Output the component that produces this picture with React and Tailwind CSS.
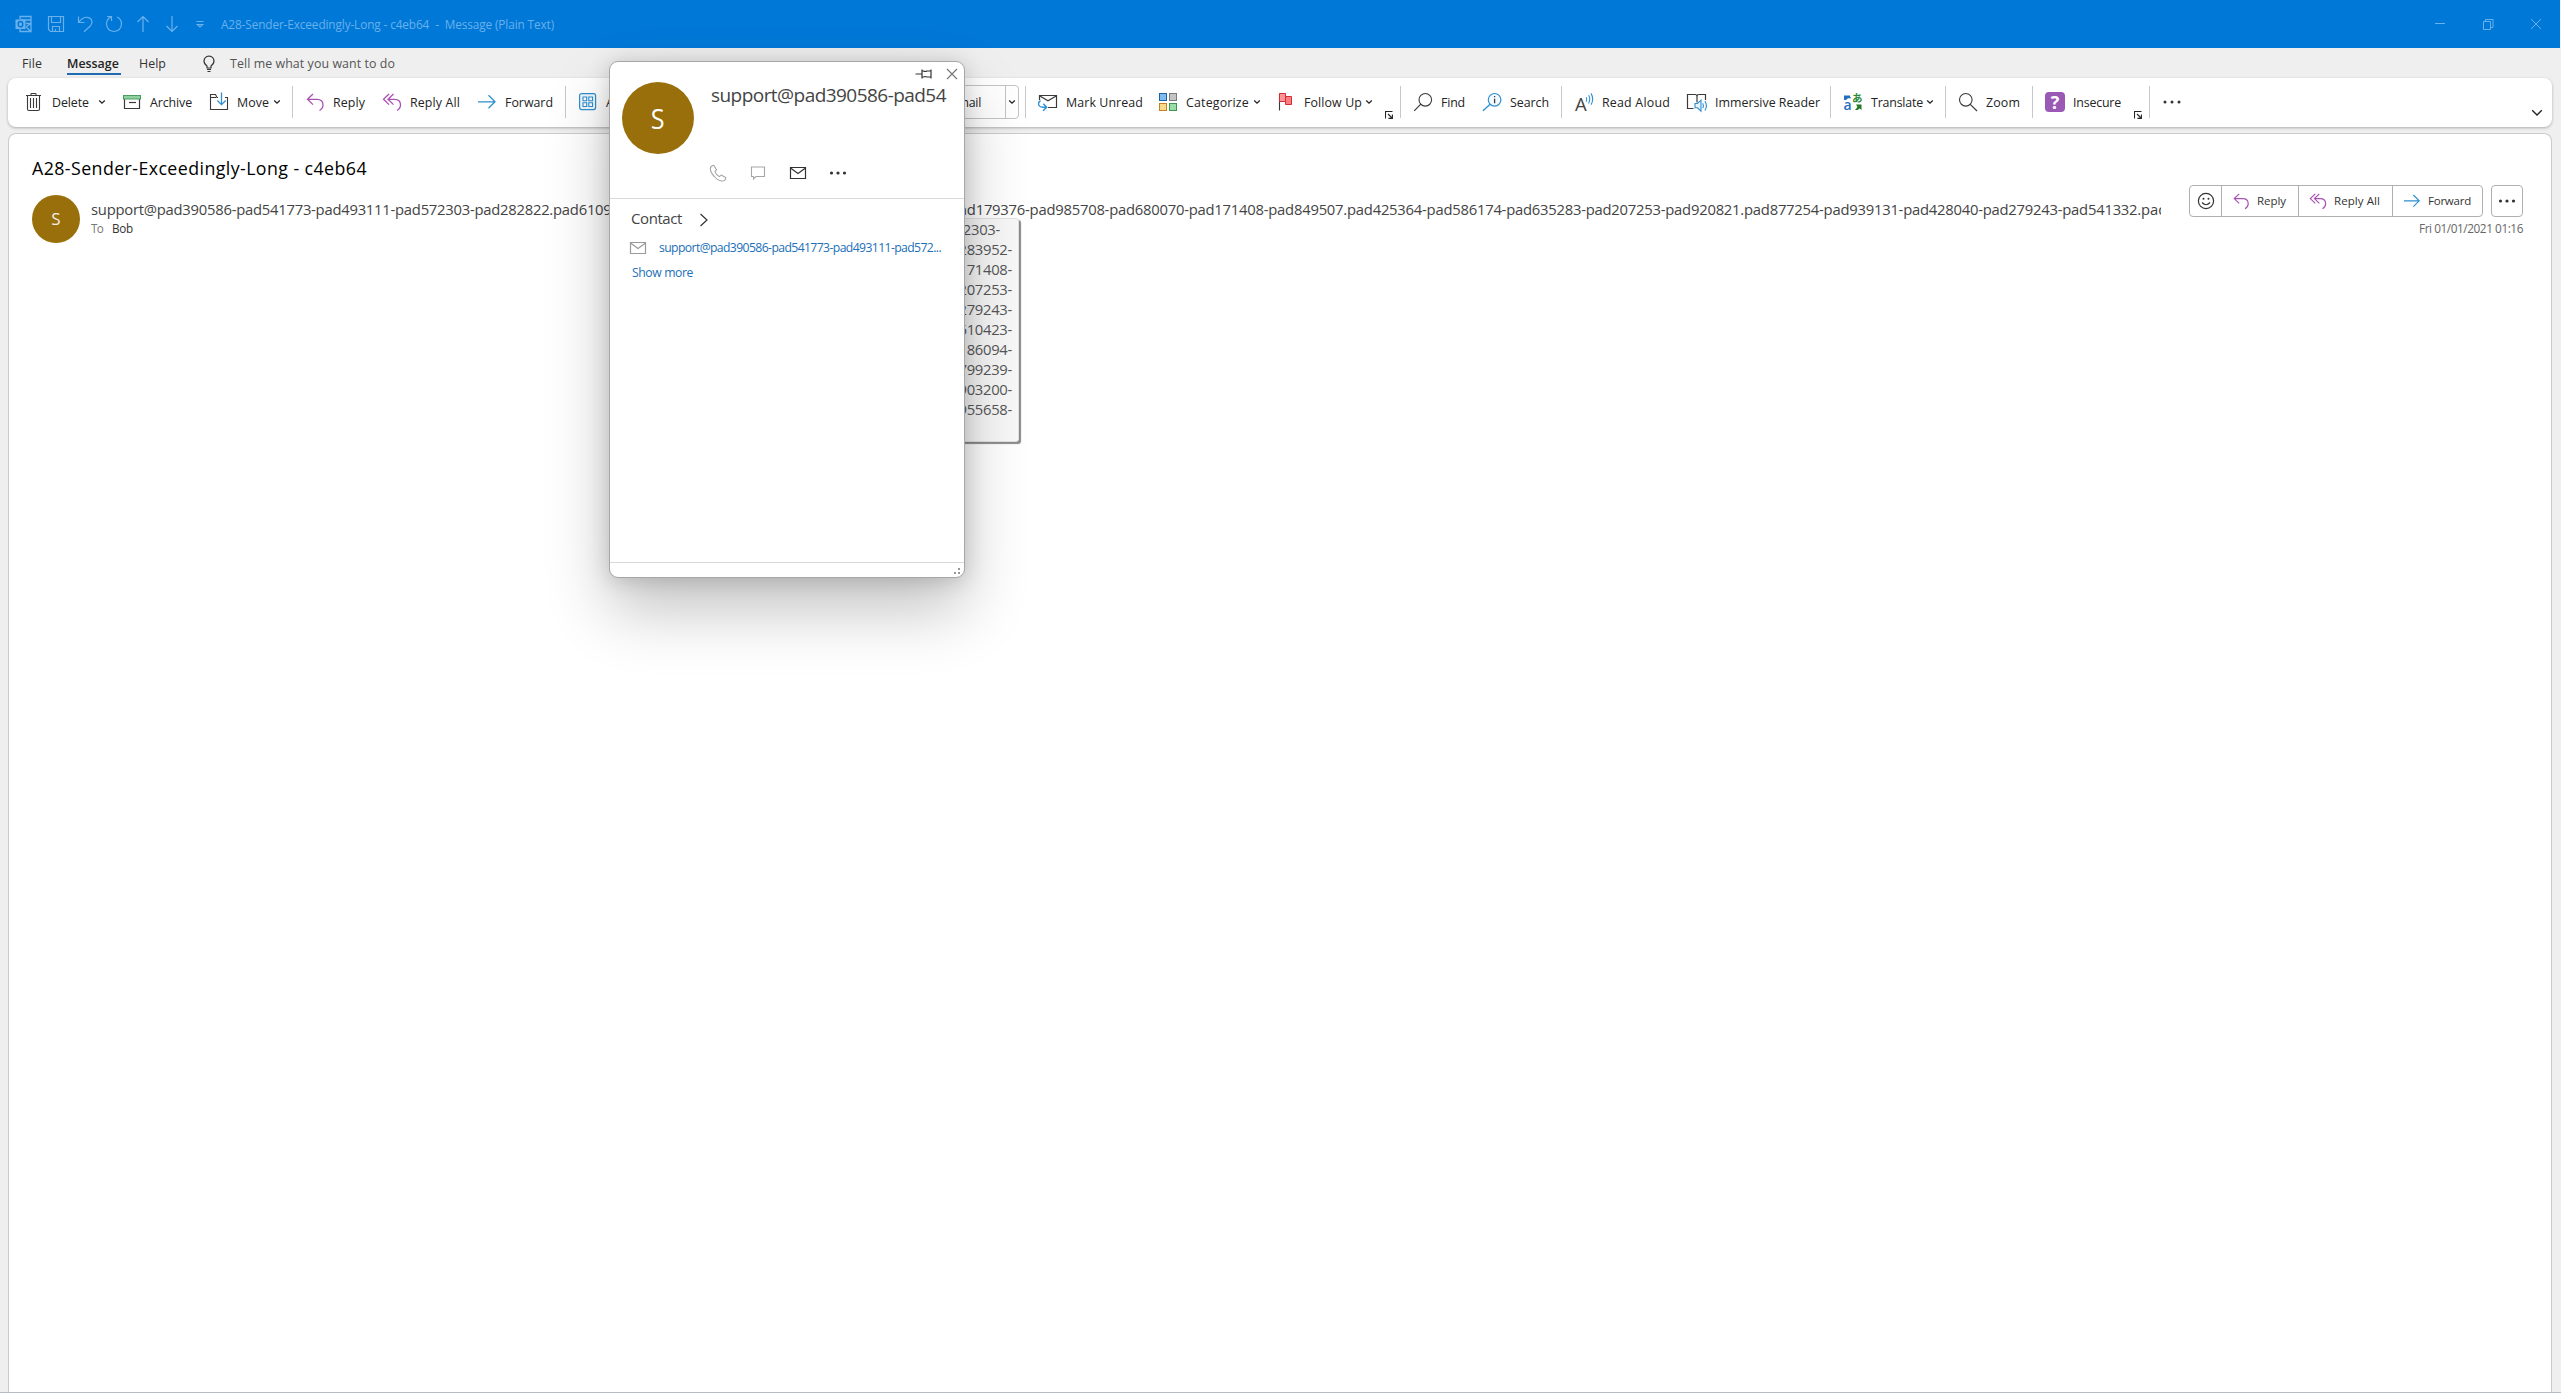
import React, { useLayoutEffect, useRef } from "react";

/* Single-line text whose tracking is adjusted so that it fills the given width. */
function Fit({ w, className = "", children }) {
  const ref = useRef(null);
  useLayoutEffect(() => {
    const el = ref.current;
    el.style.letterSpacing = "0px";
    const natural = el.getBoundingClientRect().width;
    el.style.letterSpacing = (w - natural) / children.length + "px";
  }, [w, children]);
  return (
    <span ref={ref} className={"inline-block shrink-0 whitespace-pre " + className}>
      {children}
    </span>
  );
}

function Svg({ w = 20, h = 20, className = "", children }) {
  return (
    <svg width={w} height={h} viewBox={`0 0 ${w} ${h}`} fill="none" className={"shrink-0 " + className}>
      {children}
    </svg>
  );
}

const DARK = "#3b3a39";
const BLUE = "#2f8fd0";
const PURPLE = "#a851b3";

const Chevron = ({ className = "" }) => (
  <Svg w={8} h={8} className={className}>
    <path d="M1.2 2.6 4 5.2 6.8 2.6" stroke="#242424" strokeWidth="1.3" />
  </Svg>
);

const Launcher = () => (
  <Svg w={8} h={8} className="mb-[7px] mr-[7px] ml-auto self-end">
    <path d="M.5 7.5V.5H7.5M3 3l4 4M7.4 3.4v4h-4" stroke="#242424" strokeWidth="1.1" />
  </Svg>
);

const Divider = () => <div className="mr-3 h-8 w-px shrink-0 bg-[#c8c8c8]" />;

const Dots = ({ className = "" }) => (
  <Svg w={20} h={6} className={className}>
    <circle cx="3" cy="3" r="1.5" fill="#333" />
    <circle cx="10" cy="3" r="1.5" fill="#333" />
    <circle cx="17" cy="3" r="1.5" fill="#333" />
  </Svg>
);

const DotsSmall = () => (
  <Svg w={18} h={6}>
    <circle cx="2.5" cy="3" r="1.6" fill="#333" />
    <circle cx="9" cy="3" r="1.6" fill="#333" />
    <circle cx="15.5" cy="3" r="1.6" fill="#333" />
  </Svg>
);

const Trash = () => (
  <Svg>
    <path d="M2 3.5H17M7 3.3V2.2Q7 1.5 7.7 1.5h3.6q.7 0 .7.7v1.1M3.5 3.5V17q0 1.5 1.5 1.5h9q1.5 0 1.5-1.5V3.5M6.5 6v10M9.5 6v10M12.5 6v10" stroke={DARK} strokeWidth="1.1" />
  </Svg>
);
const Archive = () => (
  <Svg>
    <path d="M2.5 7v9.5h15V7" stroke={DARK} strokeWidth="1.2" />
    <rect x="1.5" y="3.5" width="17" height="3.5" fill="#8fd19e" stroke="#4a9c62" />
    <path d="M7 10.5h7" stroke={DARK} strokeWidth="1.2" />
  </Svg>
);
const Move = () => (
  <Svg>
    <path d="M9 5.5H8L6.5 2.5h-5v15h17v-12H16M1.5 5.5H7" stroke={DARK} strokeWidth="1.1" />
    <path d="M12.5.5v12M8.3 8.5l4.2 4.2 4.2-4.2" stroke={BLUE} strokeWidth="1.3" />
  </Svg>
);
const ReplyIcon = ({ size = 20 }) => (
  <svg width={size} height={size} viewBox="0 0 20 20" fill="none" className="shrink-0">
    <path d="M8 2 2.5 7.3 8 12.6M2.5 7.3H12q6 0 6 5.7 0 3.5-3.5 5.5" stroke={PURPLE} strokeWidth="1.3" />
  </svg>
);
const ReplyAllIcon = ({ size = 20 }) => (
  <svg width={size} height={size} viewBox="0 0 20 20" fill="none" className="shrink-0">
    <path d="M7 2 1.5 7.3 7 12.6M11.5 2 6 7.3l5.5 5.3M6 7.3h6.5q6 0 6 5.7 0 3.5-3.5 5.5" stroke={PURPLE} strokeWidth="1.3" />
  </svg>
);
const ForwardIcon = ({ size = 20 }) => (
  <svg width={size} height={size} viewBox="0 0 20 20" fill="none" className="shrink-0">
    <path d="M1 9.8H18M11.5 3.3 18 9.8l-6.5 6.5" stroke={BLUE} strokeWidth="1.3" />
  </svg>
);
const Apps = () => (
  <Svg>
    <rect x="1.6" y="1.6" width="16" height="16" rx="2" stroke={BLUE} strokeWidth="1.2" fill="#eef7fc" />
    <path d="M5 5h3.7v3.7H5zM10.8 5h3.7v3.7h-3.7zM5 10.8h3.7v3.7H5zM10.8 10.8h3.7v3.7h-3.7z" stroke={BLUE} strokeWidth="1.1" fill="#fff" />
  </Svg>
);
const MarkUnread = () => (
  <Svg>
    <path d="M1.5 8V3.5h17v12H10M1.5 3.8l8.5 5 8.5-5" stroke={DARK} strokeWidth="1.2" />
    <path d="M2.5 8.5Q-.5 11 1 13.5q1 1.7 4 1.7h3M5.3 11.8l3.4 3.4-3.6 3.5" stroke={BLUE} strokeWidth="1.4" />
  </Svg>
);
const Categorize = () => (
  <Svg>
    <rect x="1.5" y="1.5" width="7" height="7" fill="#7cbcf0" stroke="#20639f" />
    <rect x="11.5" y="1.5" width="7" height="7" fill="#c4c4c4" stroke="#7a7a7a" />
    <rect x="1.5" y="11.5" width="7" height="7" fill="#f9dc87" stroke="#c77e2c" />
    <rect x="11.5" y="11.5" width="7" height="7" fill="#97dfa5" stroke="#3f9455" />
  </Svg>
);
const Flag = () => (
  <Svg>
    <path d="M3.5 1.5V18.5" stroke={DARK} strokeWidth="1.1" />
    <path d="M3.5 1.5h6v8h-6z" fill="#ff9396" stroke="#cf2f35" />
    <path d="M9.5 4.5h6v8h-6v-3z" fill="#ff7c80" stroke="#cf2f35" />
  </Svg>
);
const Find = () => (
  <Svg>
    <circle cx="12.3" cy="7.8" r="6.3" stroke={DARK} strokeWidth="1.1" />
    <path d="M7.8 12.2 1.2 18.8" stroke={DARK} strokeWidth="1.2" />
  </Svg>
);
const SearchInfo = () => (
  <Svg>
    <circle cx="12.6" cy="7.8" r="6.3" stroke={BLUE} strokeWidth="1.2" fill="#f3faff" />
    <path d="M8.1 12.2 1 18.8" stroke={BLUE} strokeWidth="1.4" />
    <path d="M12.6 6.8v4.5M12.6 4v1.3" stroke={DARK} strokeWidth="1.3" />
  </Svg>
);
const ReadAloud = () => (
  <Svg className="overflow-visible">
    <text x="1" y="18.5" fontFamily="Open Sans, sans-serif" fontSize="18.5" fill="#444">A</text>
    <path d="M12.2 5.3q1.2 2 0 4.4M14.6 3.2q2.4 3.8 0 8.2M17 1.4q3.4 5.6 0 11.4" stroke={BLUE} strokeWidth="1.1" />
  </Svg>
);
const Immersive = () => (
  <Svg className="overflow-visible">
    <path d="M6.5 16.5h-6v-14H8q2 0 2 2 0-2 2-2h6.5V8M10 4.5v6" stroke={DARK} strokeWidth="1.2" />
    <path d="M8 11.5h2.5l3.5-3.3v11l-3.5-3.4H8z" stroke={BLUE} strokeWidth="1.1" fill="#e6f4fc" />
    <path d="M15.7 11.3q1.5 2.3 0 5M17.9 9q3 4.6 0 9.5" stroke={BLUE} strokeWidth="1.1" />
  </Svg>
);
const Translate = () => (
  <Svg className="overflow-visible">
    <text x="0.5" y="17.8" fontFamily="Open Sans, sans-serif" fontSize="14" fontWeight="600" fill="#1f6fc0">a</text>
    <text x="9" y="10" fontFamily="Noto Sans CJK JP, sans-serif" fontSize="10.5" fontWeight="600" fill="#2b8a3a">あ</text>
    <path d="M1 3.5V8h2L5 6.2h3.5L7 4.8V3.5z" fill="#1f6fc0" />
    <path d="M13 12.5h5.5V18l-1.8-1.5L14.5 18H12l2.5-3z" fill="#217a21" />
  </Svg>
);
const Zoom = () => (
  <Svg>
    <circle cx="7.8" cy="7.8" r="6.3" stroke={DARK} strokeWidth="1.1" />
    <path d="M12.3 12.3 19 19" stroke={DARK} strokeWidth="1.2" />
  </Svg>
);
const Insecure = () => (
  <Svg>
    <rect width="20" height="20" rx="4" fill="#9b59b6" />
    <text x="10" y="16.5" textAnchor="middle" fontFamily="Open Sans, sans-serif" fontSize="18" fontWeight="700" fill="#fff">?</text>
  </Svg>
);

/* Ribbon command: 20px icon, label, optional menu arrow and dialog launcher. */
function Cmd({ icon, label, w, className, menu, launcher }) {
  return (
    <div className={"flex h-full shrink-0 items-center text-[12.4px] text-[#242424] " + className}>
      {icon}
      <Fit w={w} className="mt-[2px] ml-2">{label}</Fit>
      {menu && <Chevron className={menu} />}
      {launcher && <Launcher />}
    </div>
  );
}

function TitleBar() {
  const s = { stroke: "#69b1ec", strokeWidth: 1.2 };
  return (
    <header className="flex h-12 w-[2560px] items-center bg-[#0078d7] pl-[15px] text-[11.8px] text-[#69b1ec]">
      <Svg w={18} h={18}>
        <path d="M5 4V1.5h11V16.5H5V14M5 5h11M11 8.5h5M11 12l5-3.5M11 12l5 4.5" {...s} strokeWidth="1.3" />
        <rect x="0.5" y="4.5" width="10" height="9.5" fill="#69b1ec" />
        <ellipse cx="5.5" cy="9.2" rx="2.3" ry="2.6" stroke="#0078d7" strokeWidth="1.5" />
      </Svg>
      <Svg w={18} h={18} className="ml-[14px]">
        <path d="M1.5 1.5h15v15h-13l-2-2zM4.5 1.5v6h9v-6M5.5 16.5v-5h7v5M8.5 14v2" {...s} />
      </Svg>
      <Svg w={18} h={18} className="ml-[11px]">
        <path d="M2.5 1.5v6h6M2.7 7.3Q7 1.8 11.5 2.3q4.5.7 4.5 5 0 2-2 4l-6 5.5" {...s} />
      </Svg>
      <Svg w={18} h={18} className="ml-[11px]">
        <path d="M2 1.5h4.5V6M6.3 1.8Q1.5 4 1.5 9q.5 7 7.5 7.5 7-.5 7.5-7.5 0-5-4.5-7" {...s} />
      </Svg>
      <Svg w={18} h={18} className="ml-[11px]">
        <path d="M9 17V1.5M3.5 7 9 1.5 14.5 7" {...s} />
      </Svg>
      <Svg w={18} h={18} className="ml-[11px]">
        <path d="M9 1v15.5M3.5 11 9 16.5l5.5-5.5" {...s} />
      </Svg>
      <Svg w={18} h={18} className="ml-[10px]">
        <path d="M5.5 6.5h7M6.3 9.5l2.7 2.5 2.7-2.5z" {...s} />
      </Svg>
      <Fit w={333} className="mt-[2px] ml-[12px]">{"A28-Sender-Exceedingly-Long - c4eb64  -  Message (Plain Text)"}</Fit>
      <div className="ml-auto flex">
        <div className="flex w-12 justify-center"><Svg w={12} h={12}><path d="M1 5.5h10" {...s} strokeWidth="1" /></Svg></div>
        <div className="flex w-12 justify-center">
          <Svg w={12} h={12}><path d="M1.5 3.5h7v8h-7zM3.5 3V1.5h7.5V9.5H9" {...s} strokeWidth="1" /></Svg>
        </div>
        <div className="flex w-12 justify-center"><Svg w={12} h={12}><path d="M1 1l10 10M11 1 1 11" {...s} strokeWidth="1" /></Svg></div>
      </div>
    </header>
  );
}

function MenuBar() {
  return (
    <nav className="flex h-[30px] items-center pl-[22px] text-[12.4px] text-[#333]">
      <Fit w={20} className="mt-[2px]">File</Fit>
      <div className="ml-[25px] flex h-full flex-col pt-[7px]">
        <Fit w={54} className="h-[18px] leading-[18px] font-semibold text-[#242424]">Message</Fit>
        <div className="h-[2px] w-[54px] bg-[#1f6bb0]" />
      </div>
      <Fit w={27} className="mt-[2px] ml-[18px]">Help</Fit>
      <Svg w={12} h={18} className="mt-[2px] ml-[37px]">
        <path d="M4 13v-2Q1 9 1 6q.3-4.5 5-5 4.7.5 5 5 0 3-3 5v2zM4 14.5h4M4.500 16.500h3" stroke="#333" strokeWidth="1.2" />
      </Svg>
      <Fit w={165} className="mt-[2px] ml-[15px] text-[#555]">Tell me what you want to do</Fit>
    </nav>
  );
}

function Ribbon() {
  return (
    <div className="ml-2 flex h-[49px] w-[2544px] items-center rounded-lg bg-white pb-px pl-4 shadow-[0_1px_3px_rgba(0,0,0,0.28)]">
      <Cmd icon={<Trash />} label="Delete" w={37} className="w-[98px]" menu="ml-[9px]" />
      <Cmd icon={<Archive />} label="Archive" w={42} className="w-[87px]" />
      <Cmd icon={<Move />} label="Move" w={32} className="w-[83px]" menu="ml-[4px]" />
      <Divider />
      <Cmd icon={<ReplyIcon />} label="Reply" w={32} className="w-[77px]" />
      <Cmd icon={<ReplyAllIcon />} label="Reply All" w={50} className="w-[95px]" />
      <Cmd icon={<ForwardIcon />} label="Forward" w={48} className="w-[88px]" />
      <Divider />
      <Cmd icon={<Apps />} label="All Apps" w={50} className="w-[102px]" />
      <div className="mr-[6px] flex h-[34px] w-[339px] shrink-0 rounded-[4px] border border-[#c4c4c4] text-[12.4px] text-[#242424]">
        <div className="flex flex-1 items-center justify-end pt-[2px] pr-[24px]"><Fit w={64}>Team Email</Fit></div>
        <div className="flex w-[13px] items-center justify-center border-l border-[#c4c4c4]"><Chevron /></div>
      </div>
      <Divider />
      <Cmd icon={<MarkUnread />} label="Mark Unread" w={77} className="w-[120px]" />
      <Cmd icon={<Categorize />} label="Categorize" w={63} className="w-[118px]" menu="ml-[4px]" />
      <Cmd icon={<Flag />} label="Follow Up" w={58} className="w-[124px]" menu="ml-[3px]" launcher />
      <Divider />
      <Cmd icon={<Find />} label="Find" w={24} className="w-[69px]" />
      <Cmd icon={<SearchInfo />} label="Search" w={39} className="w-[79px]" />
      <Divider />
      <Cmd icon={<ReadAloud />} label="Read Aloud" w={68} className="w-[113px]" />
      <Cmd icon={<Immersive />} label="Immersive Reader" w={105} className="w-[143px]" />
      <Divider />
      <Cmd icon={<Translate />} label="Translate" w={52} className="w-[102px]" menu="ml-[3px]" />
      <Divider />
      <Cmd icon={<Zoom />} label="Zoom" w={34} className="w-[74px]" />
      <Divider />
      <Cmd icon={<Insecure />} label="Insecure" w={48} className="w-[104px]" launcher />
      <Divider />
      <Dots />
      <Svg w={12} h={8} className="mr-[9px] mb-[9px] ml-auto self-end">
        <path d="M1.2 1.2 6 6l4.8-4.8" stroke="#242424" strokeWidth="1.4" />
      </Svg>
    </div>
  );
}

/* Sender address, one entry per domain label group, with its width in pixels. */
const SENDER = [
  ["support@pad390586-pad541773-pad493111-pad572303-pad282822.", 462],
  ["pad610942-pad738251-pad904617-pad526430-pad283952.", 397],
  ["pad179376-pad985708-pad680070-pad171408-pad849507.", 397],
  ["pad425364-pad586174-pad635283-pad207253-pad920821.", 397],
  ["pad877254-pad939131-pad428040-pad279243-pad541332.", 397],
];

function Actions() {
  const cell = "flex items-center border-l border-[#b0b0b0] ";
  return (
    <div className="flex h-8 gap-2 text-[11.5px] text-[#333]">
      <div className="flex rounded-[4px] border border-[#b0b0b0]">
        <div className="flex w-[31px] items-center justify-center">
          <Svg w={18} h={18}>
            <circle cx="9" cy="9" r="7.6" stroke="#333" strokeWidth="1.2" />
            <circle cx="6.5" cy="6.8" r="1" fill="#333" />
            <circle cx="11.5" cy="6.8" r="1" fill="#333" />
            <path d="M5 10.5q4 4.5 8 0" stroke="#333" strokeWidth="1.2" />
          </Svg>
        </div>
        <div className={cell + "w-[77px] pl-[10px]"}><ReplyIcon size={18} /><Fit w={29} className="ml-[7px]">Reply</Fit></div>
        <div className={cell + "w-[94px] pl-[10px]"}><ReplyAllIcon size={18} /><Fit w={46} className="ml-[7px]">Reply All</Fit></div>
        <div className={cell + "w-[90px] pl-[10px]"}><ForwardIcon size={18} /><Fit w={43} className="ml-[7px]">Forward</Fit></div>
      </div>
      <div className="flex w-8 items-center justify-center rounded-[4px] border border-[#b0b0b0]"><DotsSmall /></div>
    </div>
  );
}

function Message() {
  return (
    <main className="mt-[6px] ml-2 h-[1260px] w-[2544px] rounded-t-lg border border-b-0 border-[#cbcbcb] bg-white pl-[23px]">
      <Fit w={335} className="mt-[21px] block h-[27px] w-fit text-[17.8px] leading-[26px] text-black">A28-Sender-Exceedingly-Long - c4eb64</Fit>
      <div className="flex">
        <div className="mt-[13px] flex size-12 items-center justify-center rounded-full bg-[#986f0b] text-[17px] text-[#f3eee2]">S</div>
        <div className="mt-[17px] ml-[11px] w-[2070px]">
          <div className="flex h-[21px] items-start overflow-hidden text-[14.8px] leading-5 text-[#444]">
            {SENDER.map(([t, w]) => <Fit key={t} w={w}>{t}</Fit>)}
            <span className="whitespace-pre">pad</span>
          </div>
          <div className="flex h-4 items-center pt-[2px] text-[11.7px]">
            <Fit w={12} className="text-[#777]">To</Fit>
            <Fit w={21} className="ml-[9px] text-[#333]">Bob</Fit>
          </div>
        </div>
        <div className="mt-[3px] ml-[28px] flex flex-col items-end">
          <Actions />
          <Fit w={104} className="mt-[3px] text-[11.8px] leading-4 text-[#666]">Fri 01/01/2021 01:16</Fit>
        </div>
      </div>
    </main>
  );
}

const TOOLTIP_LINES = [
  ["pad572303-", "pr-[18px]"],
  ["pad283952-", "pr-[6px]"],
  ["pad171408-", "pr-[6px]"],
  ["pad207253-", "pr-[6px]"],
  ["pad279243-", "pr-[6px]"],
  ["pad610423-", "pr-[6px]"],
  ["pad186094-", "pr-[6px]"],
  ["pad799239-", "pr-[6px]"],
  ["pad903200-", "pr-[6px]"],
  ["pad955658-", "pr-[6px]"],
];

function Tooltip() {
  return (
    <div className="absolute top-[218px] left-[700px] h-[224px] w-[319px] rounded-[3px] border border-[#e2e2e2] bg-[#f8f8f9] text-[14.8px] leading-5 text-[#575757] shadow-[2px_2px_1px_#8a8a8a]">
      {TOOLTIP_LINES.map(([t, pad]) => (
        <div key={t} className={"flex h-5 justify-end " + pad}><Fit w={79}>{t}</Fit></div>
      ))}
    </div>
  );
}

const Mail = ({ color, className = "" }) => (
  <Svg w={18} h={14} className={className}>
    <path d="M1.5 1.5h15v11h-15zM1.5 2l7.5 5.5L16.5 2" stroke={color} strokeWidth="1.2" />
  </Svg>
);

function ContactCard() {
  return (
    <section className="absolute top-[61px] left-[609px] flex h-[517px] w-[356px] flex-col rounded-[9px] border border-[#a6a6a6] bg-white shadow-[0_32px_64px_rgba(0,0,0,0.24),0_2px_21px_rgba(0,0,0,0.16)]">
      <div className="flex h-[137px] border-b border-[#d9d9d9]">
        <div className="mt-[20px] ml-[12px] flex size-[72px] shrink-0 items-center justify-center rounded-full bg-[#986f0b] text-[28px] text-white">
          <span className="scale-x-90">S</span>
        </div>
        <div className="flex flex-1 flex-col">
          <div className="flex h-[22px] items-center justify-end pt-px pr-[6px]">
            <Svg w={18} h={12}>
              <path d="M.5 6H7M7 1.5v9M7 3h1.5q1.5 1 3.5 0h4V9h-4q-2-1-3.5 0H7M16 1.5v9" stroke="#333" strokeWidth="1.2" />
            </Svg>
            <Svg w={12} h={12} className="ml-[13px]">
              <path d="M1 1l10 10M11 1 1 11" stroke="#777" strokeWidth="1.2" />
            </Svg>
          </div>
          <Fit w={235} className="ml-[17px] block h-[26px] w-fit text-[19px] leading-[22px] text-[#444]">support@pad390586-pad54</Fit>
          <div className="mt-[54px] ml-[15px] flex h-[18px] items-center">
            <Svg w={18} h={18}>
              <path d="M4.7 1.2 7.6 5.7 5.9 7.6q1 2.7 4.4 5l2-1.5 4.5 2.6q-.3 3.3-3.5 3.3-4 0-8-4.5Q1.3 8.3 1.4 4.5 1.6 1.7 4.7 1.2z" stroke="#a6a6a6" strokeWidth="1.1" strokeLinejoin="round" />
            </Svg>
            <Svg w={16} h={16} className="ml-[23px]">
              <path d="M1.5 2h13v9.5H6L3.5 14v-2.5h-2z" stroke="#a6a6a6" strokeWidth="1.1" />
            </Svg>
            <Mail color="#333" className="ml-[23px]" />
            <div className="ml-[22px] flex"><DotsSmall /></div>
          </div>
        </div>
      </div>
      <div className="flex flex-1 flex-col">
        <div className="mt-[8px] flex h-[23px] items-center pl-[21px] text-[15px] text-[#444]">
          <Fit w={51}>Contact</Fit>
          <Svg w={10} h={14} className="mt-[2px] ml-[17px]">
            <path d="M1.5 1 8 7l-6.5 6" stroke="#333" strokeWidth="1.2" />
          </Svg>
        </div>
        <div className="mt-[7px] flex h-[22px] items-center pl-[19px] text-[12.2px] text-[#1c6fb8]">
          <Mail color="#9a9a9a" />
          <Fit w={282} className="ml-[12px]">support@pad390586-pad541773-pad493111-pad572...</Fit>
        </div>
        <div className="mt-[3px] flex h-[22px] items-center pl-[22px] text-[12.2px] text-[#1c6fb8]"><Fit w={61}>Show more</Fit></div>
      </div>
      <div className="flex h-[15px] justify-end border-t border-[#d9d9d9] pt-[5px] pr-[4px]">
        <Svg w={6} h={6}>
          <path d="M4 0h2v2H4zM4 4h2v2H4zM0 4h2v2H0z" fill="#999" />
        </Svg>
      </div>
    </section>
  );
}

export default function App() {
  return (
    <div className="relative h-[1393px] w-[2561px] overflow-hidden bg-[#efefef] font-['Open_Sans',sans-serif]">
      <TitleBar />
      <MenuBar />
      <Ribbon />
      <Message />
      <Tooltip />
      <ContactCard />
      <div className="absolute bottom-0 left-0 h-px w-full bg-[#b8bcc4]" />
    </div>
  );
}
